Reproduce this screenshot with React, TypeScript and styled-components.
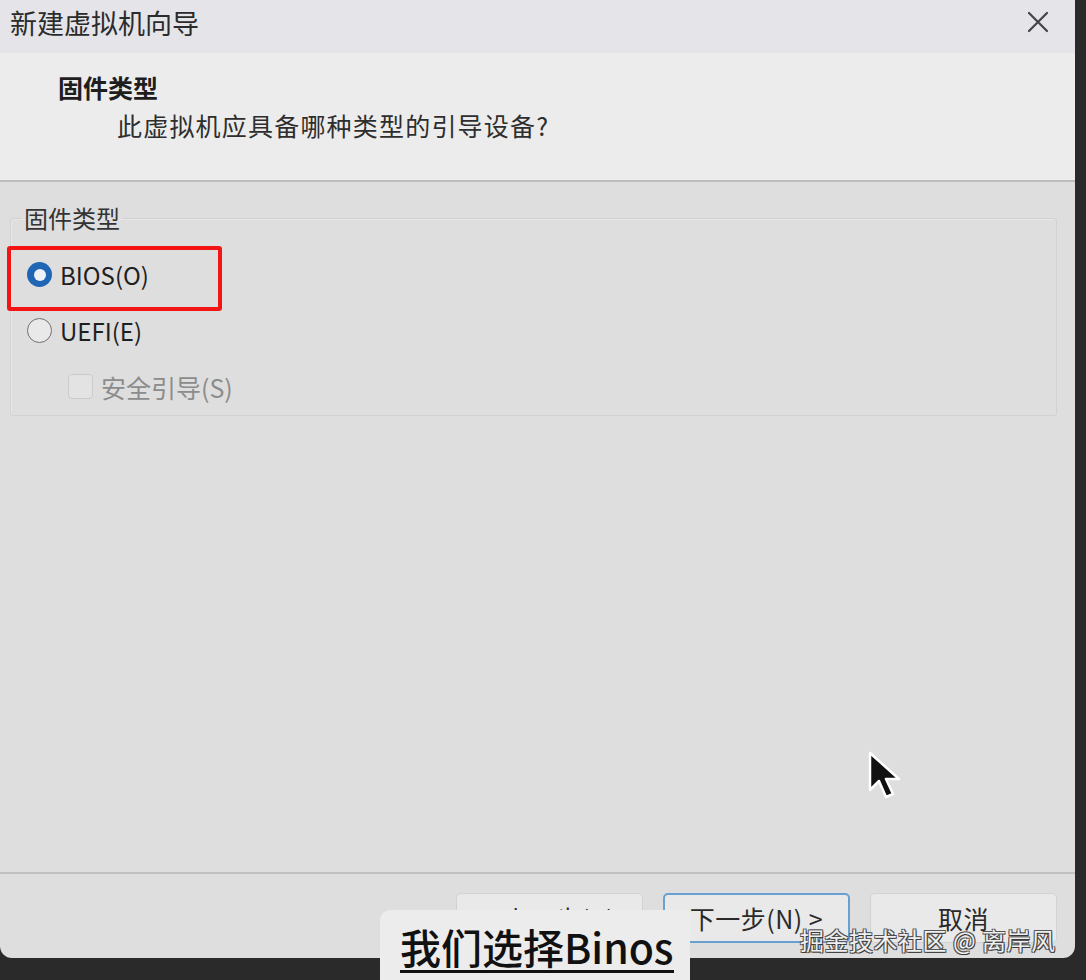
import React from 'react';
import styled, {createGlobalStyle} from 'styled-components';

const GlobalStyle = createGlobalStyle`
  html, body {
    margin: 0;
    padding: 0;
    background: #2a2a2a;
  }
  * {
    box-sizing: border-box;
  }
`;

const FONT = `"Noto Sans CJK SC", "Noto Sans", sans-serif`;

const Page = styled.div`
  position: relative;
  width: 1086px;
  height: 980px;
  overflow: hidden;
  background: #2a2a2a;
  font-family: ${FONT};
`;

const Dialog = styled.div`
  width: 1075px;
  height: 958px;
  display: flex;
  flex-direction: column;
  background: #dedede;
  border-radius: 0 0 12px 12px;
  overflow: hidden;
`;

const TitleBar = styled.div`
  height: 53px;
  flex: none;
  display: flex;
  align-items: center;
  justify-content: space-between;
  padding: 0 24px 0 10px;
  background: #e4e4e9;
`;

const Title = styled.div`
  font-size: 27px;
  color: #2b2b2b;
  margin-top: -8px;
`;

const CloseButton = styled.div`
  width: 26px;
  height: 26px;
  display: flex;
  align-items: center;
  justify-content: center;
  margin-top: -10px;
`;

const Header = styled.div`
  height: 129px;
  flex: none;
  display: flex;
  flex-direction: column;
  padding: 16px 0 0 58px;
  background: #ececec;
  border-bottom: 2px solid #bcbcbc;
`;

const HeaderTitle = styled.div`
  font-size: 25px;
  font-weight: 700;
  color: #1e1e1e;
  line-height: 36px;
`;

const HeaderSub = styled.div`
  font-size: 25px;
  color: #2e2e2e;
  letter-spacing: 1.2px;
  line-height: 40px;
  padding-left: 59px;
`;

const Body = styled.div`
  flex: 1;
  padding: 21px 18px 0 10px;
`;

const GroupBox = styled.fieldset`
  margin: 0;
  height: 213px;
  padding: 14px 0 0 16px;
  border: 1px solid #d2d2d2;
  border-radius: 3px;
  box-shadow: inset 1px 1px 0 #e6e6e6;
  display: flex;
  flex-direction: column;
`;

const Legend = styled.legend`
  font-size: 24px;
  color: #333;
  padding: 0 2px;
  margin-left: -5px;
  line-height: 30px;
`;

const OptionRow = styled.label<{indent?: number; disabled?: boolean; tall?: boolean}>`
  position: relative;
  flex: none;
  display: flex;
  align-items: center;
  gap: 8px;
  height: ${p => (p.tall ? 57 : 55)}px;
  padding-left: ${p => p.indent || 0}px;
  font-size: ${p => (p.disabled ? 25 : 24)}px;
  color: ${p => (p.disabled ? '#8c8c8c' : '#1f1f1f')};
`;

const Radio = styled.span<{checked?: boolean}>`
  width: 25px;
  height: 25px;
  flex: none;
  border-radius: 50%;
  background: ${p => (p.checked ? '#1f67b4' : '#e9e9e9')};
  border: ${p => (p.checked ? 'none' : '1.5px solid #707070')};
  display: flex;
  align-items: center;
  justify-content: center;
  &::after {
    content: '';
    display: ${p => (p.checked ? 'block' : 'none')};
    width: 12px;
    height: 12px;
    border-radius: 50%;
    background: #eef1f5;
  }
`;

const CheckBox = styled.span`
  width: 25px;
  height: 25px;
  flex: none;
  border-radius: 4px;
  border: 1.5px solid #cbcbcb;
  background: #e3e3e3;
`;

const Highlight = styled.span`
  position: absolute;
  left: -20px;
  top: -1px;
  width: 215px;
  height: 65px;
  border: 4px solid #f31414;
  border-radius: 3px;
  pointer-events: none;
`;

const Footer = styled.div`
  height: 86px;
  flex: none;
  display: flex;
  justify-content: flex-end;
  gap: 20px;
  padding: 19px 18px 0 0;
  border-top: 2px solid #c0c0c0;
`;

const Button = styled.div<{primary?: boolean}>`
  width: 187px;
  height: 50px;
  display: flex;
  align-items: center;
  justify-content: center;
  font-size: 25px;
  letter-spacing: 0.5px;
  color: #2a2a2a;
  background: #e9e9e9;
  border: ${p => (p.primary ? '2px solid #6a9fd2' : '1px solid #d2d2d2')};
  border-radius: 5px;
`;

const Caption = styled.div`
  position: absolute;
  left: 380px;
  top: 910px;
  width: 310px;
  height: 70px;
  background: #ececec;
  border-radius: 10px 4px 0 0;
  padding: 12px 0 0 20px;
`;

const CaptionText = styled.span`
  display: inline-block;
  font-size: 41px;
  font-weight: 500;
  color: #111;
  line-height: 48px;
  border-bottom: 3px solid #111;
`;

const Watermark = styled.div`
  position: absolute;
  left: 800px;
  top: 922px;
  font-size: 24px;
  color: #efefef;
  letter-spacing: 0.5px;
  text-shadow: 1px 1px 0 #3a3a3a, -1px -1px 0 #555, 1px -1px 0 #555, -1px 1px 0 #555;
`;

const Cursor = styled.svg`
  position: absolute;
  left: 866px;
  top: 750px;
`;

const App = () => {
  return (
    <>
      <GlobalStyle/>
      <Page>
        <Dialog>
          <TitleBar>
            <Title>新建虚拟机向导</Title>
            <CloseButton>
              <svg width="22" height="22" viewBox="0 0 22 22">
                <path d="M2 2 L20 20 M20 2 L2 20" stroke="#444" strokeWidth="2.2" strokeLinecap="round"/>
              </svg>
            </CloseButton>
          </TitleBar>

          <Header>
            <HeaderTitle>固件类型</HeaderTitle>
            <HeaderSub>此虚拟机应具备哪种类型的引导设备?</HeaderSub>
          </Header>

          <Body>
            <GroupBox>
              <Legend>固件类型</Legend>
              <OptionRow>
                <Highlight/>
                <Radio checked/>
                BIOS(O)
              </OptionRow>
              <OptionRow tall>
                <Radio/>
                UEFI(E)
              </OptionRow>
              <OptionRow indent={41} disabled>
                <CheckBox/>
                安全引导(S)
              </OptionRow>
            </GroupBox>
          </Body>

          <Footer>
            <Button>&lt; 上一步(B)</Button>
            <Button primary>下一步(N) &gt;</Button>
            <Button>取消</Button>
          </Footer>
        </Dialog>

        {/* 视频字幕和水印，盖在对话框上 */}
        <Caption>
          <CaptionText>我们选择Binos</CaptionText>
        </Caption>
        <Watermark>掘金技术社区 @ 离岸风</Watermark>

        <Cursor width="40" height="52" viewBox="0 0 40 52">
          <path d="M4 3 L4 40 L13 31 L20 47 L27 44 L20 29 L33 29 Z" fill="#111" stroke="#fff" strokeWidth="2.5" strokeLinejoin="round"/>
        </Cursor>
      </Page>
    </>
  );
};

export default App;
